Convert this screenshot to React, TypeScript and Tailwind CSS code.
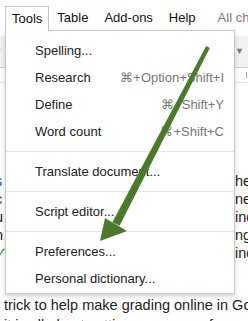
import React from 'react';

type Item = { label: string; keys?: string } | 'sep';

const items: Item[] = [
    { label: 'Spelling...' },
    { label: 'Research', keys: '⌘+Option+Shift+I' },
    { label: 'Define', keys: '⌘+Shift+Y' },
    { label: 'Word count', keys: '⌘+Shift+C' },
    'sep',
    { label: 'Translate document...' },
    'sep',
    { label: 'Script editor...' },
    'sep',
    { label: 'Preferences...' },
    { label: 'Personal dictionary...' },
];

const docLines = [
    { left: 's', leftClass: 'text-[#1155cc]', right: 'he' },
    { left: 'c', leftClass: 'text-[#222]', right: 'neit' },
    { left: 'u', leftClass: 'text-[#222]', right: 'ind' },
    { left: 'n', leftClass: 'text-[#222]', right: 'ng' },
    { left: '✓', leftClass: 'text-[#3a9a2a]', right: 'ind' },
];

const ToolsMenu = () => (
    <div className="absolute left-[5px] top-[30px] z-10 w-[230px] border border-[rgba(0,0,0,0.2)] bg-white pt-[6px] pb-[1px] shadow-[0_2px_4px_rgba(0,0,0,0.2)]">
        {items.map((it, i) =>
            it === 'sep' ? (
                <div key={i} className="my-[6px] h-px bg-[#e5e5e5]" />
            ) : (
                <div key={i} className="flex h-[27px] items-center justify-between pl-[29px] pr-[10px] text-[13px] text-[#222]">
                    <span>{it.label}</span>
                    {it.keys && <span className="text-[#777]">{it.keys}</span>}
                </div>
            )
        )}
    </div>
);

const Arrow = () => (
    <svg className="pointer-events-none absolute left-0 top-0 z-30" width="248" height="321" viewBox="0 0 248 321">
        <polygon points="206.2,46.1 209.8,47.9 119.6,225.8 112.4,222.2" fill="#4b7a2a" />
        <polygon points="105,218 127,231 100,241" fill="#4b7a2a" />
    </svg>
);

export default function App() {
    return (
        <div className="relative h-[321px] w-[248px] overflow-hidden bg-white font-['Liberation_Sans',Arial,sans-serif]">
            {/* menu bar */}
            <div className="flex h-[30px] items-start pl-[5px] pt-[6px] text-[13px] text-[#111] whitespace-nowrap">
                <div className="relative z-20 flex h-[25px] items-center border border-b-0 border-[#c6c6c6] bg-white px-[6px]">Tools</div>
                <div className="flex h-[24px] items-center px-[8px]">Table</div>
                <div className="flex h-[24px] items-center px-[8px]">Add-ons</div>
                <div className="flex h-[24px] items-center px-[8px]">Help</div>
                <div className="ml-[14px] flex h-[24px] items-center text-[#777]">All changes saved in Drive</div>
            </div>

            {/* toolbar */}
            <div className="mt-[6px] flex h-[32px] items-center justify-between border-b border-[#d0d0d0] bg-[#f1f1f1]">
                <span className="-ml-[4px] text-[13px] text-[#2a4a7a]">r</span>
                <span className="mr-[4px] text-[9px] text-[#777]">▼</span>
            </div>

            {/* ruler */}
            <div className="flex h-[15px] items-center justify-end gap-[11px] border-b border-[#e3e3e3] pr-[1px]">
                <div className="h-[6px] w-px bg-[#aaa]" />
                <div className="h-[6px] w-px bg-[#aaa]" />
            </div>

            {/* document */}
            <div className="pt-[90px] text-[14.5px] text-[#222] whitespace-nowrap">
                {docLines.map((l, i) => (
                    <div key={i} className="flex h-[18px] items-center">
                        <span className={`w-[235px] shrink-0 -indent-[5px] ${l.leftClass}`}>{l.left}</span>
                        <span>{l.right}</span>
                    </div>
                ))}
                <div className="mt-[33px] flex h-[19px] items-center pl-[4px]">trick to help make grading online in Google Docs</div>
                <div className="mt-[1px] flex h-[19px] items-center pl-[4px]">it is all about setting up your preferences for</div>
            </div>

            <ToolsMenu />
            <Arrow />
        </div>
    );
}
